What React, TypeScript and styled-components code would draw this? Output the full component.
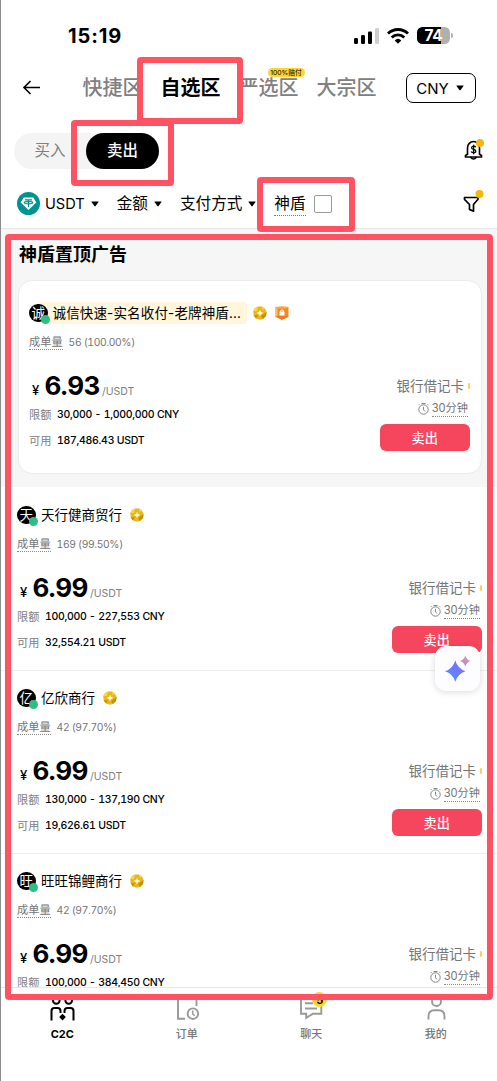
import React from "react";
import styled, { createGlobalStyle } from "styled-components";

const latin = `Inter, "Noto Sans CJK SC", sans-serif`;
const red = "#ff5263";

const GlobalStyle = createGlobalStyle`
  * { box-sizing: border-box; }
  body { margin: 0; background: #fff; font-family: ${latin}; color: #000; }
  button { font-family: inherit; }
`;

const Screen = styled.div`
  position: relative;
  width: 497px;
  height: 1081px;
  overflow: hidden;
  background: #fff;
  border-left: 1px solid #8c8c8c;
  display: flex;
  flex-direction: column;
  white-space: nowrap;
`;

const StatusBar = styled.div`
  height: 58px;
  flex: none;
  display: flex;
  align-items: center;
  justify-content: space-between;
  padding: 13px 47px 0 67px;
`;
const Clock = styled.div`
  font-size: 20px;
  font-weight: 700;
  letter-spacing: 0.9px;
`;
const StatusIcons = styled.div`
  display: flex;
  align-items: center;
  gap: 8px;
`;
const Battery = styled.div`
  position: relative;
  width: 33px;
  height: 17px;
  border-radius: 5.5px;
  background: linear-gradient(to right, #000 0 74%, #b0b0b0 74% 100%);
  color: #fff;
  font-size: 15.5px;
  font-weight: 700;
  line-height: 17px;
  text-align: center;
  letter-spacing: -0.3px;
  &::after {
    content: "";
    position: absolute;
    right: -3px;
    top: 6px;
    width: 2px;
    height: 5px;
    border-radius: 0 2px 2px 0;
    background: #b0b0b0;
  }
`;

const Header = styled.div`
  height: 60px;
  flex: none;
  display: flex;
  align-items: center;
  padding: 0 21px 0 20px;
`;
const ZoneTabs = styled.div`
  display: flex;
  gap: 18px;
  margin-left: 41.5px;
  flex: 1;
`;
const ZoneTab = styled.div<{ $active?: boolean }>`
  position: relative;
  font-size: 20px;
  line-height: 28px;
  font-weight: ${(p) => (p.$active ? 700 : 500)};
  color: ${(p) => (p.$active ? "#000" : "#808080")};
`;
const ZoneBadge = styled.span`
  position: absolute;
  left: 29px;
  top: -6px;
  width: 37px;
  height: 9px;
  border-radius: 5px;
  background: #fcd535;
  color: #000;
  font-size: 6.8px;
  font-weight: 400;
  line-height: 9px;
  text-align: center;
`;
const CurrencyButton = styled.button`
  width: 70px;
  height: 30px;
  border: 1px solid #000;
  border-radius: 7px;
  background: #fff;
  color: #000;
  padding: 0 2px 0 0;
  display: flex;
  align-items: center;
  justify-content: center;
  gap: 7px;
  font-size: 15px;
`;

const SideRow = styled.div`
  height: 66px;
  flex: none;
  display: flex;
  align-items: center;
  justify-content: space-between;
  padding: 0 12px 0 13px;
  svg {
    margin-bottom: 2px;
  }
`;
const Toggle = styled.div`
  width: 145px;
  height: 36px;
  border-radius: 18px;
  background: #f4f4f4;
  display: flex;
`;
const ToggleOption = styled.div<{ $active?: boolean }>`
  flex: ${(p) => (p.$active ? "0 0 73px" : "1")};
  height: 36px;
  border-radius: 18px;
  font-size: 15.5px;
  line-height: 36px;
  text-align: center;
  font-weight: ${(p) => (p.$active ? 500 : 400)};
  color: ${(p) => (p.$active ? "#fff" : "#808080")};
  background: ${(p) => (p.$active ? "#000" : "transparent")};
`;

const FilterRow = styled.div`
  height: 45px;
  flex: none;
  display: flex;
  align-items: center;
  padding: 0 12px 5px 16px;
  border-bottom: 1px solid #e8e8e8;
  font-size: 15.6px;
`;
const Filter = styled.div<{ $gap: number }>`
  display: flex;
  align-items: center;
  gap: 6px;
  line-height: 20px;
  margin-right: ${(p) => p.$gap}px;
`;
const Coin = styled.span`
  display: flex;
  align-items: center;
  gap: 5px;
  font-size: 14.6px;
`;
const ShieldLabel = styled.span`
  height: 24px;
  line-height: 23px;
  border-bottom: 1px dotted #777;
`;
const Checkbox = styled.div`
  width: 18px;
  height: 18px;
  border: 1px solid #999;
  border-radius: 2px;
  margin-left: 2px;
`;
const IconEnd = styled.div`
  margin: 0 0 3px auto;
  display: flex;
`;

const List = styled.div`
  height: 758px;
  flex: none;
  overflow: hidden;
`;
const Pinned = styled.div`
  height: 258px;
  background: #f6f6f6;
  padding: 0 15px 0 17px;
`;
const PinnedTitle = styled.div`
  height: 51px;
  line-height: 51px;
  padding-left: 1px;
  font-size: 18px;
  font-weight: 700;
`;
const PinnedCard = styled.div`
  height: 194px;
  border: 1px solid #ebebeb;
  border-radius: 14px;
  background: #fff;
  padding: 21px 11px 0 10px;
`;
const ListItem = styled.div`
  height: 183px;
  padding: 17px 15px 0 16px;
  box-shadow: 0 1px 0 #eeeeee;
`;

const NameRow = styled.div`
  height: 22px;
  display: flex;
  align-items: center;
  font-size: 13.5px;
`;
const Avatar = styled.div`
  position: relative;
  z-index: 1;
  width: 18.5px;
  height: 18.5px;
  border-radius: 50%;
  background: #000;
  color: #fff;
  font-size: 13.5px;
  line-height: 18px;
  display: flex;
  justify-content: center;
  &::after {
    content: "";
    position: absolute;
    left: 11.5px;
    top: 11.5px;
    width: 9px;
    height: 9px;
    border-radius: 50%;
    background: #2ebd85;
  }
`;
const Name = styled.span<{ $highlight?: boolean }>`
  height: 22px;
  line-height: 22px;
  margin-right: 8px;
  padding-left: 5.5px;
  ${(p) =>
    p.$highlight &&
    `
    width: 209px;
    margin: 0 6px 0 -10px;
    padding-left: 15px;
    letter-spacing: 0.15px;
    background: #fff6dc;
    border-radius: 0 3px 3px 0;
  `}
`;
const Badges = styled.span`
  display: flex;
  gap: 8px;
`;
const Stats = styled.div`
  height: 18px;
  margin-top: 9px;
  display: flex;
  gap: 6px;
  font-size: 10.3px;
  letter-spacing: -0.35px;
  line-height: 18px;
  color: #757575;
  font-variant-numeric: tabular-nums;
`;
const Dotted = styled.span`
  border-bottom: 1px dotted #8a8a8a;
  height: 17px;
  font-size: 11.2px;
  letter-spacing: 0;
`;
const Body = styled.div`
  display: flex;
  justify-content: space-between;
  margin-top: 20px;
`;
const Left = styled.div`
  display: flex;
  flex-direction: column;
`;
const PriceRow = styled.div`
  height: 28px;
  display: flex;
  align-items: baseline;
  line-height: 30px;
  padding-left: 3px;
`;
const Yen = styled.span`
  width: 12.500px;
  font-size: 13px;
  font-weight: 500;
`;
const Price = styled.span`
  font-size: 26px;
  font-weight: 700;
  letter-spacing: -0.8px;
  width: 57.500px;
`;
const Unit = styled.span`
  font-size: 10.5px;
  color: #808080;
`;
const Detail = styled.div<{ $top: number }>`
  height: 16px;
  line-height: 16px;
  margin-top: ${(p) => p.$top}px;
  display: flex;
  gap: 5.5px;
  font-size: 10.5px;
  letter-spacing: -0.28px;
  font-weight: 500;
  font-variant-numeric: tabular-nums;
  span {
    font-size: 11.2px;
    letter-spacing: 0;
    color: #808080;
    font-weight: 400;
  }
`;
const Right = styled.div`
  display: flex;
  flex-direction: column;
  align-items: flex-end;
  padding-top: 5px;
`;
const Payment = styled.div`
  height: 20px;
  line-height: 19px;
  display: flex;
  align-items: center;
  gap: 4px;
  font-size: 13.5px;
  color: #757575;
`;
const PaymentMark = styled.i`
  width: 2px;
  height: 6px;
  background: #f8d060;
  border-radius: 1px;
`;
const Limit = styled.div`
  height: 17px;
  margin: 4px 2px 7px 0;
  display: flex;
  align-items: center;
  gap: 3px;
  line-height: 17px;
  color: #757575;
`;
const SellButton = styled.button`
  width: 90.500px;
  height: 27px;
  border: 0;
  border-radius: 6px;
  background: #f6465d;
  color: #fff;
  padding: 0;
  font-size: 13.2px;
  font-weight: 500;
  line-height: 26px;
`;

const Nav = styled.div`
  height: 94px;
  flex: none;
  border-top: 1px solid #e6e6e6;
  display: flex;
  padding: 10px 0 0;
`;
const NavItem = styled.div<{ $active?: boolean }>`
  flex: 0 0 124.5px;
  margin-left: -1px;
  margin-right: 1px;
  display: flex;
  flex-direction: column;
  align-items: center;
  font-size: 11px;
  line-height: 16px;
  gap: 2px;
  font-weight: ${(p) => (p.$active ? 700 : 500)};
  color: ${(p) => (p.$active ? "#000" : "#777")};
`;
const NavIcon = styled.div`
  position: relative;
  width: 26px;
  height: 26px;
`;
const NavBadge = styled.span`
  position: absolute;
  left: 14px;
  top: -6px;
  width: 15px;
  height: 15px;
  border-radius: 50%;
  background: #fcd535;
  color: #000;
  font-size: 11px;
  font-weight: 700;
  line-height: 17px;
  text-align: center;
`;

const Assistant = styled.div`
  position: absolute;
  left: 434px;
  top: 646px;
  width: 45px;
  height: 45px;
  border-radius: 11px;
  background: #fdfdff;
  box-shadow: 0 1px 7px rgba(0, 0, 0, 0.15);
`;
const Marker = styled.div<{ $x: number; $y: number; $w: number; $h: number }>`
  position: absolute;
  left: ${(p) => p.$x - 1}px;
  top: ${(p) => p.$y}px;
  width: ${(p) => p.$w}px;
  height: ${(p) => p.$h}px;
  border: 6px solid ${red};
  border-radius: 4px;
`;

const Caret = () => (
  <svg width="8" height="6" viewBox="0 0 8 6">
    <path d="M.8.5h6.4q.7 0 .3.6L4.6 5q-.6.7-1.2 0L.5 1.1Q.1.5.8.5z" />
  </svg>
);

const Signal = () => (
  <svg width="25" height="16" viewBox="0 0 25 16">
    <rect x="0" y="10" width="4" height="6" rx="1.2" />
    <rect x="7" y="7" width="4" height="9" rx="1.2" />
    <rect x="14" y="3.5" width="4" height="12.5" rx="1.2" />
    <rect x="21" y="0" width="4" height="16" rx="1.2" fill="#cfcfcf" />
  </svg>
);

const Wifi = () => (
  <svg width="22" height="16" viewBox="0 0 22 16">
    <g fill="none" stroke="#000" strokeWidth="2.8">
      <path d="M1 5.6a14.2 14.2 0 0 1 20 0" />
      <path d="M4.7 9.4a9 9 0 0 1 12.6 0" />
    </g>
    <path d="M11 15.8l-3.3-3.4a4.8 4.8 0 0 1 6.6 0z" />
  </svg>
);

const BackArrow = () => (
  <svg width="20" height="16" viewBox="0 0 20 16" fill="none" stroke="#000" strokeWidth="1.6">
    <path d="M19 7.500H3.500M9.500 1L3 7.500l6.500 6.500" />
  </svg>
);

const Bell = () => (
  <svg width="22" height="22" viewBox="0 0 22 22">
    <g fill="none" stroke="#000" strokeWidth="1.6">
      <path d="M4.500 15.200V9a6 6.500 0 0 1 12 0v6.200l2 1.300v1.500h-16v-1.500z" />
      <path d="M7.500 18q3 4 6 0" />
      <path d="M12.800 8.200q-.5-1-2.200-1-2 .1-2 1.600 0 1.400 2 1.600 2.200.3 2.200 1.800 0 1.500-2.200 1.500-1.900 0-2.400-1.200M10.600 5.700v9.500" strokeWidth="1.300" />
    </g>
    <circle cx="17" cy="4" r="4" fill="#f0b90b" />
  </svg>
);

const Funnel = () => (
  <svg width="22" height="24" viewBox="0 0 22 24">
    <path
      d="M1.500 7.500h13.500v1.800l-4.500 5.200v6.700l-4-1.800v-4.900L1.500 9.300z"
      fill="none"
      stroke="#000"
      strokeWidth="1.700"
      strokeLinejoin="round"
    />
    <circle cx="16.500" cy="4" r="4" fill="#f0b90b" />
  </svg>
);

const Tether = () => (
  <svg width="23" height="23" viewBox="0 0 23 23">
    <circle cx="11.500" cy="11.500" r="11.500" fill="#009393" />
    <path d="M6.700 5.500h9.600l3 5-7.800 7.500-7.800-7.500z" fill="#fff" />
    <path
      d="M8 7.900h7M11.500 8v7M7.300 10.600c0-1.600 8.400-1.600 8.400 0s-8.400 1.600-8.400 0z"
      fill="none"
      stroke="#009393"
      strokeWidth="1.200"
    />
  </svg>
);

const GoldBadge = () => (
  <svg width="14" height="14" viewBox="0 0 14 14">
    <path d="M5 .4L9 .4 12 2.800 13.600 6 13 10 10 13 7 13.700 3 12.500.7 9.500.3 5 2 2z" fill="#e9b816" />
    <path d="M5 .4L2 2 .3 5l3.700 0zM9 .4l3 2.400L9.500 4z" fill="#f7d649" />
    <path d="M13.600 6L13 10l-3 3-2-3zM3 12.500L.7 9.500 5 9z" fill="#c98f0b" />
    <path d="M7 4.500v5M4.500 7h5" stroke="#fff" strokeWidth="1.300" />
  </svg>
);

const ShieldBadge = () => (
  <svg width="14" height="14" viewBox="0 0 14 14">
    <path d="M.5 1L7 .6l6.500.4v9.700L7 13.700.5 10.700z" fill="#f58a24" />
    <path d="M.5 1L2.500 2.500v7.500L.5 10.700z" fill="#fbbd70" />
    <path d="M.5 1L7 .6l6.500.4-2 1.500h-9z" fill="#f9a850" />
    <path d="M13.500 10.700L7 13.700l-6.500-3 2-.7h9z" fill="#f07a1c" />
    <rect x="4.500" y="5.500" width="5" height="4" rx=".6" fill="#fff" />
    <path d="M5.700 6V4.500q1.300-1.200 2.600 0V6" fill="none" stroke="#fff" />
  </svg>
);

const Timer = () => (
  <svg width="11" height="12" viewBox="0 0 11 12" fill="none" stroke="#858585" strokeWidth="1">
    <circle cx="5.500" cy="6.500" r="4.700" />
    <path d="M3.500.5h4M5.500 3.800v3l1.500 1.700M9.500 1.200l1 1M1.500 1.200l-1 1" />
  </svg>
);

const Sparkles = () => (
  <svg width="45" height="45" viewBox="0 0 45 45">
    <defs>
      <linearGradient id="big" x1="0" y1="1" x2="1" y2="0">
        <stop offset="0" stopColor="#3fa2ff" />
        <stop offset=".5" stopColor="#6a7bf8" />
        <stop offset="1" stopColor="#8a6cf5" />
      </linearGradient>
      <linearGradient id="small" x1="0" y1="1" x2="1" y2="0">
        <stop offset="0" stopColor="#9a86f2" />
        <stop offset="1" stopColor="#f39b90" />
      </linearGradient>
    </defs>
    <path d="M20.300 14.500q2.400 8.300 10.300 10.700-7.900 2.400-10.300 10.600-2.400-8.200-10.300-10.600 7.900-2.400 10.300-10.700z" fill="url(#big)" />
    <path d="M30.300 9.500q1.300 4.200 5.200 5.500-3.900 1.300-5.200 5.500-1.300-4.200-5.200-5.500 3.900-1.300 5.200-5.500z" fill="url(#small)" />
  </svg>
);

const C2CIcon = () => (
  <svg width="26" height="26" viewBox="0 0 26 26" fill="none" stroke="#000" strokeWidth="2">
    <circle cx="7.300" cy="2.500" r="3.300" />
    <circle cx="19.700" cy="2.500" r="3.300" />
    <path d="M2.500 22.500V13q0-3 3-3H8.500q3 0 3 3v2M15.500 15v-2q0-3 3-3h3q3 0 3 3v9.500" />
    <path d="M13.500 15.800l3.300 3.300-3.300 3.300-3.300-3.300z" fill="#000" stroke="none" />
  </svg>
);
const OrderIcon = () => (
  <svg width="26" height="26" viewBox="0 0 26 26" fill="none" stroke="#999" strokeWidth="1.900">
    <path d="M22.500 8V-1H4v21.800h7" />
    <circle cx="18.900" cy="15.700" r="5.300" />
    <path d="M18.700 12.500v3.500l2 1.700" strokeWidth="1.500" />
  </svg>
);
const ChatIcon = () => (
  <svg width="26" height="26" viewBox="0 0 26 26" fill="none" stroke="#999" strokeWidth="1.900">
    <path d="M3 0h20.300v15.800H15L8.200 19.800v-4H3zM7 5.200h8M7 10.500h12" />
  </svg>
);
const UserIcon = () => (
  <svg width="26" height="26" viewBox="0 0 26 26" fill="none" stroke="#999" strokeWidth="1.900">
    <circle cx="13.500" cy="3.500" r="4.500" />
    <path d="M5.500 21.500v-3.300q0-6 6-6h4q6 0 6 6v3.300" />
  </svg>
);

interface OfferData {
  name: string;
  highlight?: boolean;
  orders: string;
  price: string;
  limit: string;
  available: string;
}

const pinned: OfferData = {
  name: "诚信快速-实名收付-老牌神盾...",
  highlight: true,
  orders: "56 (100.00%)",
  price: "6.93",
  limit: "30,000 - 1,000,000 CNY",
  available: "187,486.43 USDT",
};

const offers: OfferData[] = [
  { name: "天行健商贸行", orders: "169 (99.50%)", price: "6.99", limit: "100,000 - 227,553 CNY", available: "32,554.21 USDT" },
  { name: "亿欣商行", orders: "42 (97.70%)", price: "6.99", limit: "130,000 - 137,190 CNY", available: "19,626.61 USDT" },
  { name: "旺旺锦鲤商行", orders: "42 (97.70%)", price: "6.99", limit: "100,000 - 384,450 CNY", available: "" },
];

const Offer = ({ data }: { data: OfferData }) => (
  <>
    <NameRow>
      <Avatar>{data.name[0]}</Avatar>
      <Name $highlight={data.highlight}>{data.name}</Name>
      <Badges>
        <GoldBadge />
        {data.highlight && <ShieldBadge />}
      </Badges>
    </NameRow>
    <Stats>
      <Dotted>成单量</Dotted>
      {data.orders}
    </Stats>
    <Body>
      <Left>
        <PriceRow>
          <Yen>¥</Yen>
          <Price>{data.price}</Price>
          <Unit>/USDT</Unit>
        </PriceRow>
        <Detail $top={7.5}>
          <span>限额</span>
          {data.limit}
        </Detail>
        {data.available && (
          <Detail $top={10}>
            <span>可用</span>
            {data.available}
          </Detail>
        )}
      </Left>
      <Right>
        <Payment>
          银行借记卡
          <PaymentMark />
        </Payment>
        <Limit>
          <Timer />
          <Dotted>30分钟</Dotted>
        </Limit>
        {data.available && <SellButton>卖出</SellButton>}
      </Right>
    </Body>
  </>
);

export default function App() {
  return (
    <Screen>
      <GlobalStyle />
      <StatusBar>
        <Clock>15:19</Clock>
        <StatusIcons>
          <Signal />
          <Wifi />
          <Battery>74</Battery>
        </StatusIcons>
      </StatusBar>
      <Header>
        <BackArrow />
        <ZoneTabs>
          <ZoneTab>快捷区</ZoneTab>
          <ZoneTab $active>自选区</ZoneTab>
          <ZoneTab>
            严选区
            <ZoneBadge>100%赔付</ZoneBadge>
          </ZoneTab>
          <ZoneTab>大宗区</ZoneTab>
        </ZoneTabs>
        <CurrencyButton>
          CNY <Caret />
        </CurrencyButton>
      </Header>
      <SideRow>
        <Toggle>
          <ToggleOption>买入</ToggleOption>
          <ToggleOption $active>卖出</ToggleOption>
        </Toggle>
        <Bell />
      </SideRow>
      <FilterRow>
        <Filter $gap={18}>
          <Coin>
            <Tether />
            USDT
          </Coin>
          <Caret />
        </Filter>
        <Filter $gap={18}>
          金额 <Caret />
        </Filter>
        <Filter $gap={18}>
          支付方式 <Caret />
        </Filter>
        <Filter $gap={0}>
          <ShieldLabel>神盾</ShieldLabel>
          <Checkbox />
        </Filter>
        <IconEnd>
          <Funnel />
        </IconEnd>
      </FilterRow>
      <List>
        <Pinned>
          <PinnedTitle>神盾置顶广告</PinnedTitle>
          <PinnedCard>
            <Offer data={pinned} />
          </PinnedCard>
        </Pinned>
        {offers.map((o) => (
          <ListItem key={o.name}>
            <Offer data={o} />
          </ListItem>
        ))}
      </List>
      <Nav>
        <NavItem $active>
          <NavIcon>
            <C2CIcon />
          </NavIcon>
          C2C
        </NavItem>
        <NavItem>
          <NavIcon>
            <OrderIcon />
          </NavIcon>
          订单
        </NavItem>
        <NavItem>
          <NavIcon>
            <ChatIcon />
            <NavBadge>5</NavBadge>
          </NavIcon>
          聊天
        </NavItem>
        <NavItem>
          <NavIcon>
            <UserIcon />
          </NavIcon>
          我的
        </NavItem>
      </Nav>
      <Assistant>
        <Sparkles />
      </Assistant>
      <Marker $x={137} $y={57} $w={106} $h={67} />
      <Marker $x={71} $y={120} $w={103} $h={66} />
      <Marker $x={257} $y={177} $w={98} $h={55} />
      <Marker $x={5} $y={234} $w={488} $h={766} />
    </Screen>
  );
}
